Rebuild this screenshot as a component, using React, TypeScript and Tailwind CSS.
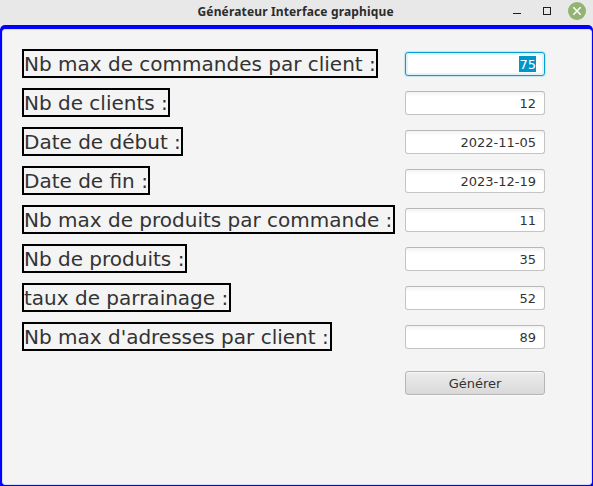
const fields = [
  { label: 'Nb max de commandes par client :', value: '75', width: 'w-[356px]', focused: true },
  { label: 'Nb de clients :', value: '12', width: 'w-[148px]' },
  { label: 'Date de début :', value: '2022-11-05', width: 'w-[161px]' },
  { label: 'Date de fin :', value: '2023-12-19', width: 'w-[128px]' },
  { label: 'Nb max de produits par commande :', value: '11', width: 'w-[373px]' },
  { label: 'Nb de produits :', value: '35', width: 'w-[165px]' },
  { label: 'taux de parrainage :', value: '52', width: 'w-[209px]' },
  { label: "Nb max d'adresses par client :", value: '89', width: 'w-[310px]' },
];

function TitleBar() {
  return (
    <header className="grid h-[25px] shrink-0 grid-cols-[1fr_196px_1fr] items-start bg-[#e8e8e8]">
      <span />
      <h1 className="-ml-px whitespace-nowrap font-['Noto_Sans',sans-serif] text-[12px] leading-[23px] font-bold tracking-[0.15px] text-[#2c2c2c]">
        Générateur Interface graphique
      </h1>
      <svg className="h-[25px] w-[86px] justify-self-end" viewBox="0 0 86 25" fill="none">
        <path d="M6 13.5h8" stroke="#1e1e1e" />
        <rect x="36.5" y="7.5" width="7" height="7" stroke="#1e1e1e" />
        <circle cx="70" cy="11" r="9" fill="#92b372" />
        <path d="M66.3 7.3l7.4 7.4M73.7 7.3l-7.4 7.4" stroke="#fff" strokeWidth="1.5" />
      </svg>
    </header>
  );
}

export default function App() {
  return (
    <div className="flex h-[486px] w-[593px] flex-col overflow-hidden bg-[#e8e8e8] font-['DejaVu_Sans',sans-serif]">
      <TitleBar />
      <div className="flex-1 rounded-t-[5px] bg-[#0000ff] pt-[4px] pr-px pb-px pl-[2px]">
        <main className="flex h-full flex-col gap-[10px] rounded-[3px] border border-[#dadaf6] bg-[#f4f4f4] pt-[19px] pl-[19px]">
          {fields.map((field) => (
            <div key={field.label} className="grid h-[29px] grid-cols-[383px_140px] items-center">
              <div className={`${field.width} h-[29px] border-2 border-black text-[20px] leading-[27px] whitespace-nowrap text-[#333333]`}>
                {field.label}
              </div>
              <div
                className={`flex h-[24px] items-center justify-end rounded-[3px] border pr-[8px] text-[13px] text-[#333333] ${
                  field.focused
                    ? 'border-[#039ed3] bg-white shadow-[0_0_1px_1px_#c5e5f0,inset_0_0_0_2px_#e1f2f8]'
                    : 'border-[#c4c4c4] border-t-[#b8b8b8] bg-linear-to-b from-[#f3f3f3] to-white to-[5px]'
                }`}
              >
                <span className={`block h-4 leading-[18px] ${field.focused ? 'bg-[#0096c9] text-white' : ''}`}>
                  {field.value}
                </span>
              </div>
            </div>
          ))}
          <button className="mt-[10px] ml-[383px] h-[24px] w-[140px] rounded-[3px] border border-[#b5b5b5] bg-linear-to-b from-[#ececec] to-[#d9d9d9] pt-px text-[13px] leading-[22px] text-[#333333] shadow-[inset_0_1px_0_#f6f6f6,0_1px_0_#fafafa]">
            Générer
          </button>
        </main>
      </div>
    </div>
  );
}
